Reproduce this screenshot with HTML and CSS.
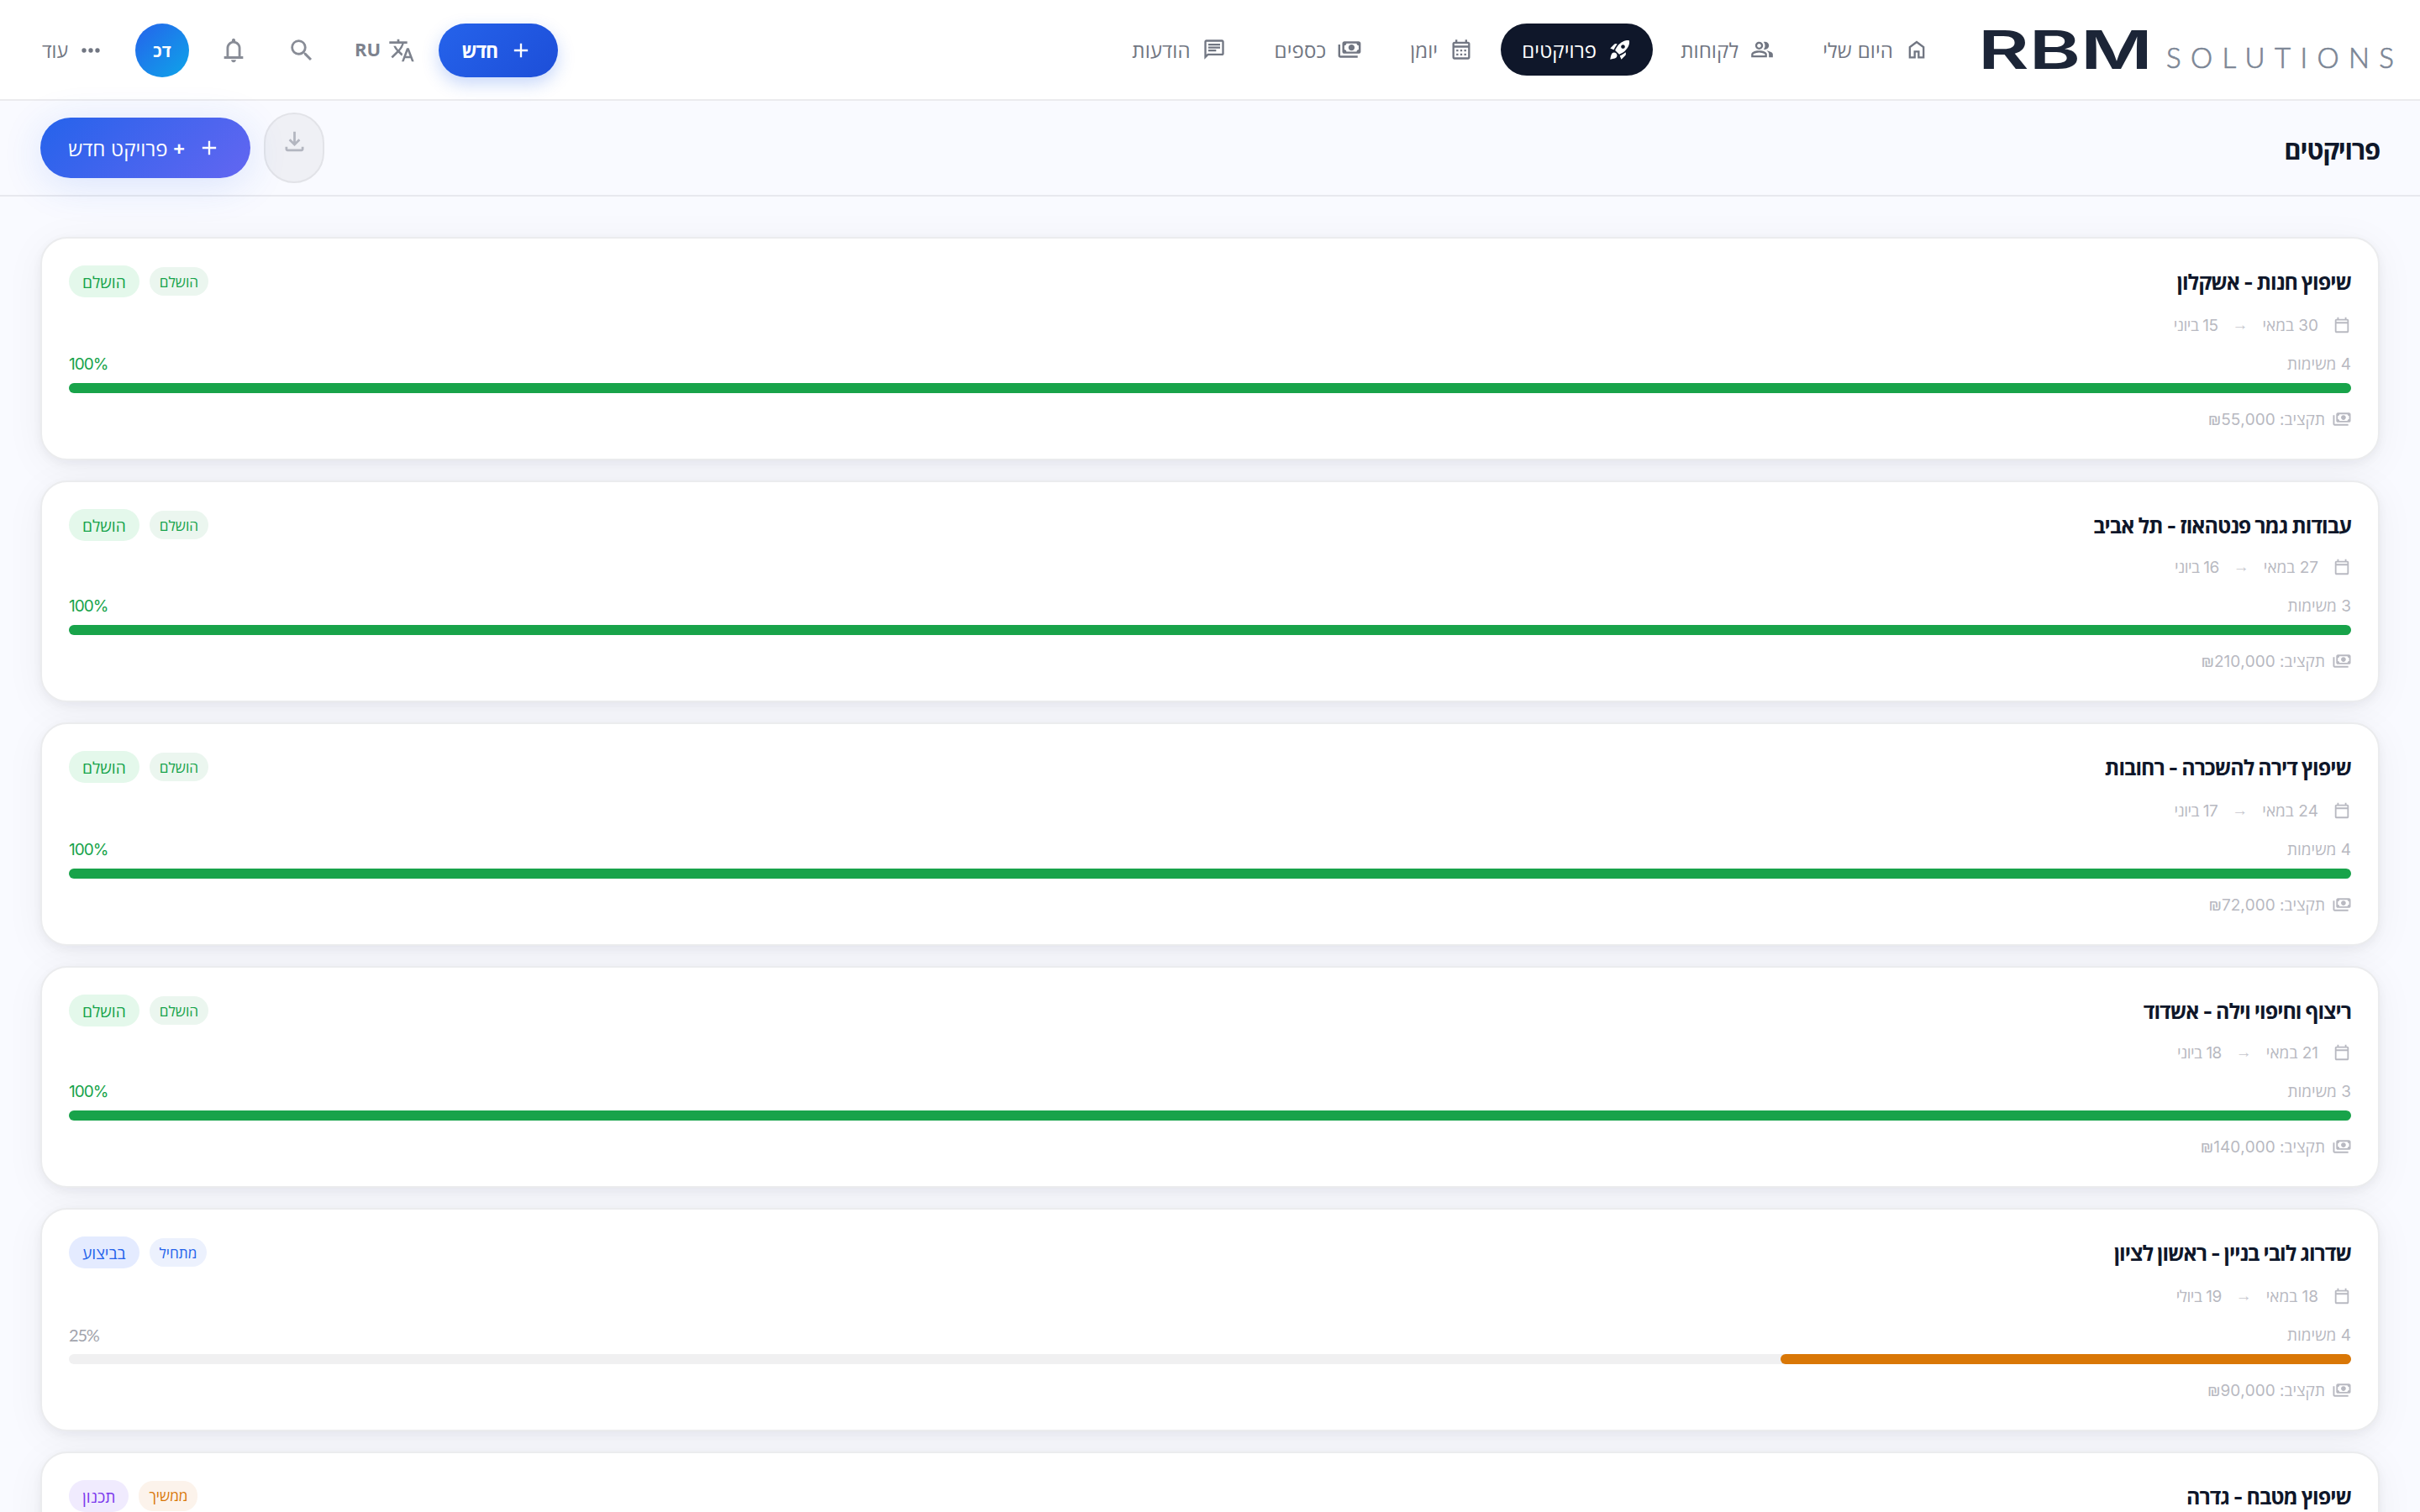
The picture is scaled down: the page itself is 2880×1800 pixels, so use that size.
FILE: index.html
```html
<!DOCTYPE html>
<html lang="he" dir="rtl">
<head>
  <meta charset="UTF-8">
  <meta name="viewport" content="width=device-width, initial-scale=1.0">
  <title>פרויקטים</title>
  <link rel="stylesheet" href="styles.css">
</head>
<body>
  <!-- Icon sprite -->
  <svg class="sprite" aria-hidden="true">
    <symbol id="i-home" viewBox="0 0 24 24"><path d="M6 19h3v-6h6v6h3v-9l-6-4.5L6 10v9zm-2 2V9l8-6 8 6v12h-7v-6h-2v6H4z"/></symbol>
    <symbol id="i-group" viewBox="0 0 24 24"><path d="M1 20v-2.8c0-.57.15-1.09.44-1.56.29-.48.68-.84 1.16-1.09 1.03-.52 2.08-.91 3.15-1.17S7.9 13 9 13s2.18.13 3.25.38 2.12.65 3.15 1.17c.48.25.87.61 1.16 1.09.29.47.44.99.44 1.56V20H1zm18 0v-3c0-.73-.2-1.44-.61-2.11s-.99-1.25-1.74-1.74c.85.1 1.65.27 2.4.51s1.45.54 2.1.89c.6.33 1.06.7 1.38 1.11s.47.86.47 1.34v3h-4zM9 12c-1.1 0-2.04-.39-2.82-1.18S5 9.1 5 8s.39-2.04 1.18-2.83S7.9 4 9 4s2.04.39 2.82 1.17S13 6.9 13 8s-.39 2.04-1.18 2.82S10.1 12 9 12zm10-4c0 1.1-.39 2.04-1.18 2.82S16.1 12 15 12c-.18 0-.42-.02-.7-.06s-.51-.09-.7-.14c.45-.53.8-1.13 1.04-1.78S15 8.7 15 8s-.12-1.37-.36-2.02-.59-1.24-1.04-1.78c.23-.08.47-.14.7-.16S14.77 4 15 4c1.1 0 2.04.39 2.82 1.17S19 6.9 19 8zM3 18h12v-.8a.97.97 0 0 0-.5-.85 12.7 12.7 0 0 0-2.73-1.01 11.8 11.8 0 0 0-5.54 0c-.92.22-1.83.56-2.73 1.01a.97.97 0 0 0-.5.85v.8zm6-8c.55 0 1.02-.2 1.41-.59S11 8.55 11 8s-.2-1.02-.59-1.41S9.55 6 9 6s-1.02.2-1.41.59S7 7.45 7 8s.2 1.02.59 1.41S8.45 10 9 10z"/></symbol>
    <symbol id="i-rocket" viewBox="0 0 24 24"><path fill-rule="evenodd" d="M9.19 6.35c-2.04 2.29-3.44 5.58-3.57 5.89L2 10.69l4.05-4.05c.47-.47 1.15-.68 1.81-.55l1.33.26zM11.17 17s3.74-1.55 5.89-3.7c5.4-5.4 4.5-9.62 4.21-10.57-.95-.3-5.17-1.19-10.57 4.21C8.55 9.09 7 12.83 7 12.83L11.17 17zm6.48-2.19c-2.29 2.04-5.58 3.44-5.89 3.57L13.31 22l4.05-4.05c.47-.47.68-1.15.55-1.81l-.26-1.33zM9 18c0 .83-.34 1.58-.88 2.12C6.94 21.3 2 22 2 22s.7-4.94 1.88-6.12A2.996 2.996 0 0 1 9 18zm4-9c0-1.1.9-2 2-2s2 .9 2 2-.9 2-2 2-2-.9-2-2z"/></symbol>
    <symbol id="i-month" viewBox="0 0 24 24"><path d="M19 4h-1V2h-2v2H8V2H6v2H5c-1.11 0-2 .9-2 2v14c0 1.1.89 2 2 2h14c1.1 0 2-.9 2-2V6c0-1.1-.9-2-2-2zm0 16H5V10h14v10zm0-12H5V6h14v2zM7 12h2v2H7zm4 0h2v2h-2zm4 0h2v2h-2zM7 16h2v2H7zm4 0h2v2h-2zm4 0h2v2h-2z"/></symbol>
    <symbol id="i-money" viewBox="30 -940 900 920"><path d="M560-440q-50 0-85-35t-35-85q0-50 35-85t85-35q50 0 85 35t35 85q0 50-35 85t-85 35ZM280-320q-33 0-56.500-23.500T200-400v-320q0-33 23.500-56.500T280-800h560q33 0 56.500 23.500T920-720v320q0 33-23.500 56.500T840-320H280Zm80-80h400q0-33 23.500-56.500T840-480v-160q-33 0-56.500-23.500T760-720H360q0 33-23.500 56.500T280-640v160q33 0 56.500 23.500T360-400Zm440 240H120q-33 0-56.500-23.500T40-240v-440h80v440h680v80Z"/></symbol>
    <symbol id="i-chat" viewBox="0 0 24 24"><path d="M4 4h16v12H5.170L4 17.170V4m0-2c-1.100 0-1.990.9-1.990 2L2 22l4-4h14c1.100 0 2-.9 2-2V4c0-1.100-.9-2-2-2H4zm2 10h8v2H6v-2zm0-3h12v2H6V9zm0-3h12v2H6V6z"/></symbol>
    <symbol id="i-plus" viewBox="0 0 24 24"><path d="M19 13h-6v6h-2v-6H5v-2h6V5h2v6h6v2z"/></symbol>
    <symbol id="i-translate" viewBox="0 0 24 24"><path d="M12.870 15.070l-2.540-2.510.03-.03A17.520 17.520 0 0 0 14.070 6H17V4h-7V2H8v2H1v1.990h11.170C11.500 7.920 10.440 9.750 9 11.350 8.070 10.320 7.300 9.190 6.690 8h-2c.73 1.630 1.730 3.170 2.980 4.560l-5.090 5.020L4 19l5-5 3.110 3.110.76-2.040zM18.500 10h-2L12 22h2l1.120-3h4.750L21 22h2l-4.500-12zm-2.620 7l1.620-4.330L19.120 17h-3.240z"/></symbol>
    <symbol id="i-search" viewBox="0 0 24 24"><path d="M15.500 14h-.79l-.28-.27A6.471 6.471 0 0 0 16 9.500 6.500 6.500 0 1 0 9.500 16c1.610 0 3.090-.59 4.230-1.570l.27.28v.79l5 4.990L20.490 19l-4.990-5zm-6 0C7.010 14 5 11.990 5 9.500S7.010 5 9.500 5 14 7.010 14 9.500 11.990 14 9.500 14z"/></symbol>
    <symbol id="i-bell" viewBox="0 0 24 24"><path d="M4 19v-2h2v-7c0-1.380.42-2.610 1.250-3.690A5.900 5.900 0 0 1 10.500 4.200v-.7c0-.42.150-.77.440-1.060S11.580 2 12 2s.77.150 1.060.44.440.64.440 1.060v.7a5.900 5.900 0 0 1 3.250 2.110C17.580 7.390 18 8.620 18 10v7h2v2H4zm8 3a2 2 0 0 1-2-2h4a2 2 0 0 1-2 2zm-4-5h8v-7c0-1.100-.39-2.040-1.180-2.820A3.850 3.850 0 0 0 12 6c-1.100 0-2.040.39-2.820 1.180A3.850 3.850 0 0 0 8 10v7z"/></symbol>
    <symbol id="i-dots" viewBox="0 0 24 24"><path d="M6 10a2 2 0 1 0 0 4 2 2 0 0 0 0-4zm12 0a2 2 0 1 0 0 4 2 2 0 0 0 0-4zm-6 0a2 2 0 1 0 0 4 2 2 0 0 0 0-4z"/></symbol>
    <symbol id="i-download" viewBox="0 0 24 24"><path d="M12 16l-5-5 1.400-1.450 2.600 2.600V3.500h2v8.650l2.600-2.600L17 11l-5 5zm-6 4.500c-.55 0-1.020-.2-1.410-.59S4 19.050 4 18.500V16.500h2v2h12v-2h2v2c0 .55-.2 1.020-.59 1.410s-.86.59-1.410.59H6z"/></symbol>
    <symbol id="i-calendar" viewBox="0 0 24 24"><path d="M5 22c-.55 0-1.020-.2-1.410-.59S3 20.550 3 20V6c0-.55.2-1.020.59-1.410S4.450 4 5 4h1V2h2v2h8V2h2v2h1c.55 0 1.020.2 1.410.59S21 5.450 21 6v14c0 .55-.2 1.020-.59 1.410S19.550 22 19 22H5zm0-2h14V10H5v10zM5 8h14V6H5v2z"/></symbol>
  </svg>

  <!-- Top bar -->
  <header class="topbar">
    <svg class="logo" width="496" height="60" viewBox="0 0 496 60">
      <text class="logo-main" x="-6" y="53.500" textLength="208" lengthAdjust="spacingAndGlyphs">RBM</text>
      <text class="logo-sub" x="218" y="53" textLength="271">SOLUTIONS</text>
    </svg>
    <nav class="nav">
      <a class="nav-item"><svg class="icon"><use href="#i-home"/></svg><span>היום שלי</span></a>
      <a class="nav-item"><svg class="icon"><use href="#i-group"/></svg><span>לקוחות</span></a>
      <a class="nav-item active"><svg class="icon"><use href="#i-rocket"/></svg><span>פרויקטים</span></a>
      <a class="nav-item"><svg class="icon"><use href="#i-month"/></svg><span>יומן</span></a>
      <a class="nav-item"><svg class="icon"><use href="#i-money"/></svg><span>כספים</span></a>
      <a class="nav-item"><svg class="icon"><use href="#i-chat"/></svg><span>הודעות</span></a>
    </nav>
    <div class="tools">
      <button class="btn-new"><svg class="icon"><use href="#i-plus"/></svg><span>חדש</span></button>
      <button class="lang"><svg class="icon"><use href="#i-translate"/></svg><span>RU</span></button>
      <button class="tool search"><svg class="icon"><use href="#i-search"/></svg></button>
      <button class="tool bell"><svg class="icon"><use href="#i-bell"/></svg></button>
      <div class="avatar">דכ</div>
      <button class="more"><svg class="icon"><use href="#i-dots"/></svg><span>עוד</span></button>
    </div>
  </header>

  <!-- Page header -->
  <div class="page-header">
    <h1>פרויקטים</h1>
    <div class="page-actions">
      <button class="btn-export"><svg class="icon"><use href="#i-download"/></svg></button>
      <button class="btn-create"><svg class="icon"><use href="#i-plus"/></svg><span><b>+</b> פרויקט חדש</span></button>
    </div>
  </div>

  <!-- Projects -->
  <main class="projects">
    <article class="card">
      <div class="card-head">
        <h2>שיפוץ חנות - אשקלון</h2>
        <div class="tags"><span class="tag small green">הושלם</span><span class="tag green">הושלם</span></div>
      </div>
      <div class="dates"><svg class="icon"><use href="#i-calendar"/></svg><span>30 במאי</span><span class="arrow">→</span><span class="end">15 ביוני</span></div>
      <div class="stats"><span>4 משימות</span><span class="percent done">100%</span></div>
      <div class="bar"><div class="fill" style="width: 100%"></div></div>
      <div class="budget"><svg class="icon"><use href="#i-money"/></svg><span>תקציב: ₪55,000</span></div>
    </article>

    <article class="card">
      <div class="card-head">
        <h2>עבודות גמר פנטהאוז - תל אביב</h2>
        <div class="tags"><span class="tag small green">הושלם</span><span class="tag green">הושלם</span></div>
      </div>
      <div class="dates"><svg class="icon"><use href="#i-calendar"/></svg><span>27 במאי</span><span class="arrow">→</span><span class="end">16 ביוני</span></div>
      <div class="stats"><span>3 משימות</span><span class="percent done">100%</span></div>
      <div class="bar"><div class="fill" style="width: 100%"></div></div>
      <div class="budget"><svg class="icon"><use href="#i-money"/></svg><span>תקציב: ₪210,000</span></div>
    </article>

    <article class="card">
      <div class="card-head">
        <h2>שיפוץ דירה להשכרה - רחובות</h2>
        <div class="tags"><span class="tag small green">הושלם</span><span class="tag green">הושלם</span></div>
      </div>
      <div class="dates"><svg class="icon"><use href="#i-calendar"/></svg><span>24 במאי</span><span class="arrow">→</span><span class="end">17 ביוני</span></div>
      <div class="stats"><span>4 משימות</span><span class="percent done">100%</span></div>
      <div class="bar"><div class="fill" style="width: 100%"></div></div>
      <div class="budget"><svg class="icon"><use href="#i-money"/></svg><span>תקציב: ₪72,000</span></div>
    </article>

    <article class="card">
      <div class="card-head">
        <h2>ריצוף וחיפוי וילה - אשדוד</h2>
        <div class="tags"><span class="tag small green">הושלם</span><span class="tag green">הושלם</span></div>
      </div>
      <div class="dates"><svg class="icon"><use href="#i-calendar"/></svg><span>21 במאי</span><span class="arrow">→</span><span class="end">18 ביוני</span></div>
      <div class="stats"><span>3 משימות</span><span class="percent done">100%</span></div>
      <div class="bar"><div class="fill" style="width: 100%"></div></div>
      <div class="budget"><svg class="icon"><use href="#i-money"/></svg><span>תקציב: ₪140,000</span></div>
    </article>

    <article class="card">
      <div class="card-head">
        <h2>שדרוג לובי בניין - ראשון לציון</h2>
        <div class="tags"><span class="tag small blue">מתחיל</span><span class="tag blue">בביצוע</span></div>
      </div>
      <div class="dates"><svg class="icon"><use href="#i-calendar"/></svg><span>18 במאי</span><span class="arrow">→</span><span class="end">19 ביולי</span></div>
      <div class="stats"><span>4 משימות</span><span class="percent">25%</span></div>
      <div class="bar"><div class="fill orange" style="width: 25%"></div></div>
      <div class="budget"><svg class="icon"><use href="#i-money"/></svg><span>תקציב: ₪90,000</span></div>
    </article>

    <article class="card">
      <div class="card-head">
        <h2>שיפוץ מטבח - גדרה</h2>
        <div class="tags"><span class="tag small amber">ממשיך</span><span class="tag purple">תכנון</span></div>
      </div>
    </article>
  </main>
</body>
</html>
```

FILE: styles.css
```css
* {
  box-sizing: border-box;
}

body {
  margin: 0;
  height: 1800px;
  overflow: hidden;
  background: #f9faff;
  color: #0f172a;
  font-family: Inter, "Open Sans", sans-serif;
  font-size: 26px;
}

h1, h2 {
  margin: 0;
}

button {
  border: none;
  background: none;
  padding: 0;
  font: inherit;
  color: inherit;
}

.sprite {
  display: none;
}

.icon {
  width: 28px;
  height: 28px;
  fill: currentColor;
  flex: none;
}

/* Top bar */
.topbar {
  display: flex;
  height: 120px;
  padding: 28px 24px 0;
  background: #fff;
  border-bottom: 2px solid #ebebee;
  color: #717682;
}

.logo {
  flex: none;
  margin-left: 40px;
  direction: ltr;
  overflow: visible;
}

.logo-main {
  font-family: Inter, sans-serif;
  font-size: 63px;
  font-weight: 600;
  fill: #1c2537;
}

.logo-sub {
  font-family: Lato, sans-serif;
  font-size: 33px;
  font-weight: 300;
  fill: #7c8695;
  stroke: #7c8695;
  stroke-width: 0.7px;
}

.nav {
  display: flex;
  gap: 8px;
}

.nav-item {
  display: flex;
  align-items: center;
  gap: 14px;
  height: 62px;
  padding: 0 25px;
  border-radius: 31px;
  font-size: 24px;
  letter-spacing: 0.1px;
  white-space: nowrap;
}

.nav-item.active {
  background: #0f172a;
  color: #fff;
}

.tools {
  display: flex;
  align-items: center;
  height: 64px;
  margin-right: auto;
  margin-left: 26px;
}

.btn-new {
  display: flex;
  align-items: center;
  gap: 14px;
  width: 142px;
  height: 64px;
  padding-right: 30px;
  border-radius: 32px;
  background: linear-gradient(135deg, #2563eb, #1d4ed8);
  box-shadow: 0 8px 20px rgba(37, 99, 235, 0.25);
  color: #fff;
  font-weight: 700;
  font-size: 23px;
  letter-spacing: -1px;
}

.lang {
  display: flex;
  align-items: center;
  gap: 9px;
  margin-right: 28px;
  font-family: "Open Sans", sans-serif;
  font-size: 22px;
  font-weight: 700;
  color: #7d828d;
}

.lang span {
  padding-bottom: 4px;
}

.lang .icon {
  width: 32px;
  height: 32px;
}

.tool {
  display: flex;
  color: #888c96;
}

.tool .icon {
  width: 34px;
  height: 34px;
}

.search {
  margin-right: 46px;
}

.bell {
  margin-right: 47px;
}

.avatar {
  display: flex;
  align-items: center;
  justify-content: center;
  width: 64px;
  height: 64px;
  margin-right: 36px;
  border-radius: 50%;
  background: linear-gradient(135deg, #2563eb, #0ea5e9);
  color: #fff;
  font-size: 20px;
  font-weight: 700;
}

.more {
  display: flex;
  align-items: center;
  gap: 11px;
  margin-right: 37px;
  font-size: 23px;
}

.more .icon {
  width: 32px;
  height: 32px;
}

/* Page header */
.page-header {
  display: flex;
  align-items: center;
  justify-content: space-between;
  height: 114px;
  padding: 0 48px;
  border-bottom: 2px solid #e7e8ee;
}

.page-header h1 {
  font-size: 31px;
  font-weight: 700;
  letter-spacing: -1.2px;
  padding-top: 4px;
}

.page-actions {
  display: flex;
  align-items: center;
  gap: 16px;
}

.btn-export {
  display: flex;
  justify-content: center;
  align-items: flex-start;
  width: 72px;
  height: 84px;
  padding-top: 16px;
  border: 2px solid #e2e3e8;
  border-radius: 36px;
  background: #eff0f5;
  color: #b3b6c0;
}

.btn-export .icon {
  width: 33px;
  height: 33px;
}

.btn-create {
  display: flex;
  align-items: center;
  gap: 15px;
  width: 250px;
  height: 72px;
  padding-right: 35px;
  border-radius: 36px;
  background: linear-gradient(135deg, #2563eb, #6366f1);
  box-shadow: 0 8px 48px rgba(37, 99, 235, 0.15);
  color: #fff;
  font-size: 24px;
  white-space: nowrap;
}

.btn-create b {
  font-family: "Open Sans", sans-serif;
  font-size: 24px;
}

/* Project cards */
.projects {
  display: flex;
  flex-direction: column;
  gap: 24px;
  padding: 48px;
}

.card {
  flex: none;
  height: 266px;
  padding: 32px;
  border: 2px solid #ebecee;
  border-radius: 32px;
  background: #fff;
  box-shadow: 0 4px 12px rgba(15, 23, 42, 0.05), 0 8px 48px rgba(15, 23, 42, 0.05);
}

.card:nth-child(even) {
  height: 264px;
}

.card-head {
  display: flex;
  justify-content: space-between;
  align-items: center;
  height: 38px;
}

.card h2 {
  font-size: 25px;
  font-weight: 700;
  letter-spacing: -1px;
}

.tags {
  display: flex;
  align-items: center;
  gap: 12px;
}

.tag {
  height: 38px;
  padding: 0 16px;
  border-radius: 19px;
  font-size: 19.2px;
  line-height: 40px;
  text-align: center;
}

.tag.small {
  height: 34px;
  line-height: 36px;
  padding: 0 12px;
  border-radius: 17px;
  font-size: 17.2px;
}

.tag.green {
  background: #e4f8eb;
  color: #16a34a;
}

.tag.small.green {
  background: #ebf6ef;
}

.tag.blue {
  background: #e4ebff;
  color: #2563eb;
}

.tag.small.blue {
  background: #ecf1fd;
}

.tag.purple {
  background: #f0ebfe;
  color: #7c3aed;
}

.tag.small.amber {
  height: 36px;
  background: #fcf3eb;
  color: #d97706;
}

.dates,
.stats,
.budget {
  display: flex;
  align-items: center;
  height: 28px;
  font-size: 19px;
  color: #b8b9c1;
}

.dates .icon,
.budget .icon {
  width: 22px;
  height: 22px;
}

.dates {
  gap: 17px;
  margin-top: 19px;
}

.card:nth-child(even) .dates {
  margin-top: 17px;
}

.dates .end {
  letter-spacing: -0.5px;
}

.arrow {
  font-family: "Liberation Sans", sans-serif;
  opacity: 0.8;
}

.stats {
  justify-content: space-between;
  margin-top: 18px;
}

.percent {
  color: #a1a3ac;
  direction: ltr;
  font-family: Lato, sans-serif;
  font-size: 20px;
  letter-spacing: -1.2px;
}

.percent.done {
  font-family: Inter, sans-serif;
  font-size: 19px;
  letter-spacing: -1px;
  color: #16a34a;
}

.bar {
  height: 12px;
  margin-top: 9px;
  border-radius: 6px;
  background: #f0f0f1;
}

.fill {
  height: 12px;
  border-radius: 6px;
  background: #18a34a;
}

.fill.orange {
  background: #d97706;
}

.budget {
  gap: 9px;
  margin-top: 17px;
}
```
